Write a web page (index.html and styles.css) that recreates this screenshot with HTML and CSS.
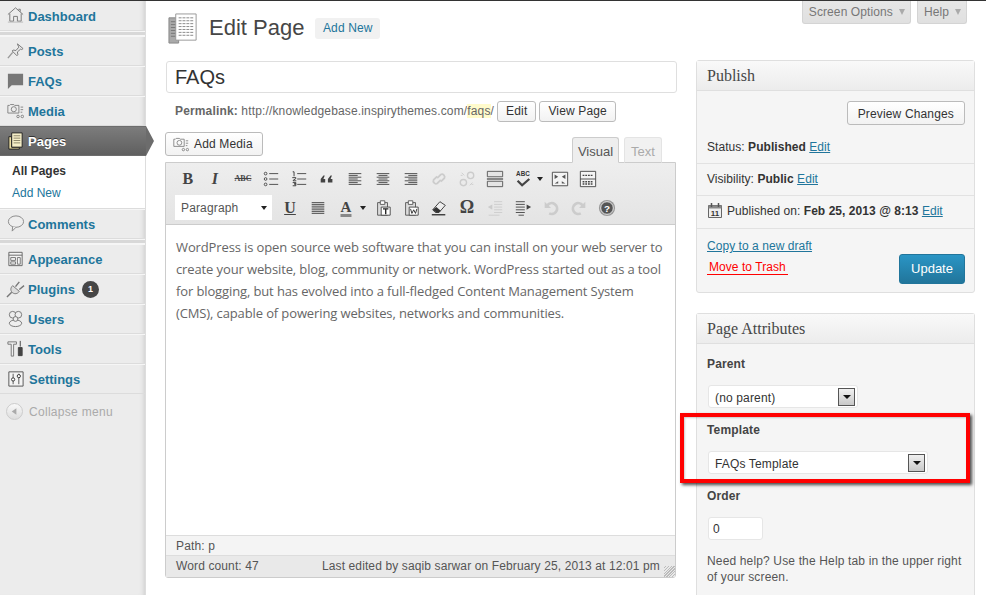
FILE: index.html
```html
<!DOCTYPE html>
<html>
<head>
    <meta charset="utf-8">
    <title>Edit Page</title>
    <link rel="stylesheet" href="styles.css">
</head>
<body>
    <nav class="sidebar">
        <a class="menu-item first"><svg class="menu-icon" viewBox="0 0 20 20"><path d="M2 10 10 3l8 7M4 9v8h4v-5h4v5h4V9M13 4.500h2v2.500" fill="none" stroke="#777"/><path d="M2 18h16" stroke="#bbb"/></svg>Dashboard</a>
        <div class="menu-sep"></div>
        <a class="menu-item"><svg class="menu-icon" viewBox="0 0 20 20"><path d="M12 3l6 5-1.500 1-1-.500-3.500 3 .5 3-1 1-5-5 1-1 3 .5 3-3.500-.5-1z" fill="#e8e8e8" stroke="#777"/><path d="M7 12 2 18" stroke="#999" stroke-width="1.500"/></svg>Posts</a>
        <a class="menu-item"><svg class="menu-icon" viewBox="0 0 20 20"><path d="M2 3h16v12H6l-4 4z" fill="#777"/></svg>FAQs</a>
        <a class="menu-item"><svg class="menu-icon menu-icon-small" viewBox="0 0 20 20"><path d="M1 4h2l1-1h4l1 1h5v9H1z" fill="none" stroke="#777"/><circle cx="8" cy="8.500" r="3" fill="none" stroke="#777"/><path d="M16 6h3M16 9h3M16 12h2" stroke="#777"/><circle cx="13" cy="17" r="1.500" fill="none" stroke="#777"/><circle cx="18" cy="17" r="1.500" fill="none" stroke="#777"/></svg>Media</a>
        <a class="menu-item current"><svg class="menu-icon" viewBox="0 0 20 20"><path d="M3 6h3v11h8v2H3z" fill="#e9dca0" stroke="#222"/><path d="M6 2h11v15H6z" fill="#f6efc8" stroke="#222"/><path d="M8 5h7M8 7.500h7M8 10h7M8 12.500h7" stroke="#8a8468"/></svg>Pages</a>
        <ul class="submenu">
            <li class="submenu-current">All Pages</li>
            <li>Add New</li>
        </ul>
        <a class="menu-item"><svg class="menu-icon" viewBox="0 0 20 20"><ellipse cx="10.500" cy="8" rx="8" ry="6" fill="#eee" stroke="#888"/><path d="M7 13.500 6.500 18l4-4" fill="#eee" stroke="#888"/></svg>Comments</a>
        <div class="menu-sep"></div>
        <a class="menu-item"><svg class="menu-icon" viewBox="0 0 20 20"><path d="M3 3.500h14v14H3z" fill="#f4f4f4" stroke="#666"/><path d="M3 6.500h14" stroke="#666"/><path d="M5 9h5v3H5zM5 13.500h5v2.500H5zM12 9h3v7h-3z" fill="none" stroke="#777"/></svg>Appearance</a>
        <a class="menu-item plugins"><svg class="menu-icon" viewBox="0 0 20 20"><path d="M7 7l7 6c-2 3-5 3-7 1.500S4 10 7 7z" fill="#ddd" stroke="#777"/><path d="M10 8l4-5M14 11l5-4M6 14l-5 5" stroke="#777" stroke-width="1.500"/></svg>Plugins<span class="badge">1</span></a>
        <a class="menu-item"><svg class="menu-icon" viewBox="0 0 20 20"><circle cx="7" cy="6" r="3.500" fill="#eee" stroke="#777"/><circle cx="13" cy="6" r="3.500" fill="#eee" stroke="#777"/><ellipse cx="10" cy="15" rx="6.500" ry="3.500" fill="#eee" stroke="#777"/><circle cx="10" cy="10.500" r="2.500" fill="#eee" stroke="#777"/></svg>Users</a>
        <a class="menu-item"><svg class="menu-icon" viewBox="0 0 20 20"><path d="M2 3h9v2.500H8V18H5.500V5.500H2z" fill="#eee" stroke="#777"/><path d="M15 2v6M13 9h4v8.500h-4z" fill="#444" stroke="#444"/></svg>Tools</a>
        <a class="menu-item settings"><svg class="menu-icon" viewBox="0 0 20 20"><path d="M3 3h15v15H3z" fill="#f4f4f4" stroke="#555"/><path d="M7.500 5v11M13.500 5v11" stroke="#555"/><circle cx="7.500" cy="11" r="1.700" fill="#fff" stroke="#333"/><circle cx="13.500" cy="7.500" r="1.700" fill="#fff" stroke="#333"/></svg>Settings</a>
        <div class="collapse"><span class="collapse-btn"><svg viewBox="0 0 16 16"><path d="M10 4.500v7L5 8z" fill="#aaa"/></svg></span>Collapse menu</div>
    </nav>

    <main class="content">
        <header class="topbar">
            <div class="heading">
                <svg class="heading-icon" viewBox="0 0 34 34"><path d="M2 6h10v26H2z" fill="#aaa" stroke="#888"/><path d="M4 10h8M4 13h8M4 16h8M4 19h8M4 22h8M4 25h8" stroke="#777"/><path d="M9 2h21v27H9z" fill="#fff" stroke="#999"/><path d="M12 6h15M12 9h15M12 12h15M12 15h15M12 18h15M12 21h15M12 24h15" stroke="#888" stroke-dasharray="3 1"/></svg>
                <h1>Edit Page</h1>
                <a class="add-new">Add New</a>
            </div>
            <div class="meta-tabs">
                <span class="meta-tab">Screen Options<i class="meta-arrow"></i></span>
                <span class="meta-tab">Help<i class="meta-arrow"></i></span>
            </div>
        </header>

        <div class="columns">
            <section class="editor-col">
                <input class="title-input" type="text" value="FAQs">
                <div class="permalink">
                    <strong>Permalink:</strong>&nbsp;http://knowledgebase.inspirythemes.com/<span class="slug">faqs</span>/
                    <a class="btn">Edit</a>
                    <a class="btn">View Page</a>
                </div>
                <div class="editor-tools">
                    <a class="btn add-media"><svg viewBox="0 0 20 20"><path d="M1 4h2l1-1h4l1 1h5v9H1z" fill="none" stroke="#777"/><circle cx="8" cy="8.500" r="3" fill="none" stroke="#777"/><path d="M16 6h3M16 9h3M16 12h2" stroke="#777"/><circle cx="13" cy="17" r="1.500" fill="none" stroke="#777"/><circle cx="18" cy="17" r="1.500" fill="none" stroke="#777"/></svg>Add Media</a>
                    <div class="tabs">
                        <span class="tab active">Visual</span>
                        <span class="tab tab-text">Text</span>
                    </div>
                </div>
                <div class="editor">
                    <div class="toolbar">
                        <div class="tool-row">
                            <span class="tool tool-b">B</span>
                            <span class="tool tool-i">I</span>
                            <span class="tool tool-abc">ABC</span>
                            <span class="tool"><svg viewBox="0 0 20 20"><path d="M8 4h10M8 10h10M8 16h10" stroke="#444"/><circle cx="4" cy="4" r="1.500" fill="none" stroke="#444"/><circle cx="4" cy="10" r="1.500" fill="none" stroke="#444"/><circle cx="4" cy="16" r="1.500" fill="none" stroke="#444"/></svg></span>
                            <span class="tool"><svg viewBox="0 0 20 20"><path d="M8 4h10M8 10h10M8 16h10" stroke="#444"/><path d="M3 2h1.500v5M2.500 8.500h4v1l-3 2v.5h3.500M3 14h3.500v1.500H4.500h2v2H3" fill="none" stroke="#333"/></svg></span>
                            <span class="tool"><svg viewBox="0 0 20 20"><path d="M3 14v-4l3-4h1.500L6 10h2v4zM11 14v-4l3-4h1.500L14 10h2v4z" fill="#444"/></svg></span>
                            <span class="tool"><svg viewBox="0 0 20 20"><path d="M3 4h14M3 6h10M3 8h14M3 10h10M3 12h14M3 14h10M3 16h14" stroke="#444"/></svg></span>
                            <span class="tool"><svg viewBox="0 0 20 20"><path d="M3 4h14M5 6h10M3 8h14M5 10h10M3 12h14M5 14h10M3 16h14" stroke="#444"/></svg></span>
                            <span class="tool"><svg viewBox="0 0 20 20"><path d="M3 4h14M7 6h10M3 8h14M7 10h10M3 12h14M7 14h10M3 16h14" stroke="#444"/></svg></span>
                            <span class="tool"><svg viewBox="0 0 20 20"><path d="M8 9l4-4a3 3 0 0 1 4 4l-4 4M12 11l-4 4a3 3 0 0 1-4-4l4-4" fill="none" stroke="#ccc" stroke-width="2"/></svg></span>
                            <span class="tool"><svg viewBox="0 0 20 20"><circle cx="14" cy="6" r="3.500" fill="none" stroke="#ccc" stroke-width="1.500"/><circle cx="6" cy="14" r="3.500" fill="none" stroke="#ccc" stroke-width="1.500"/><path d="M4 3l3 3M3 6h2M13 17l3-3M15 16h2" stroke="#ccc"/></svg></span>
                            <span class="tool"><svg viewBox="0 0 20 20"><path d="M1.500 1.500h17v6h-17zM1.500 12.500h17v6h-17z" fill="#e4e4e4" stroke="#555"/><path d="M1 10h18" stroke="#555" stroke-width="1.500"/></svg></span>
                            <span class="tool tool-spell"><svg viewBox="0 0 20 20"><text x="10" y="7" class="spell-text">ABC</text><path d="M4 12l5 5 8-7" fill="none" stroke="#444" stroke-width="2.500"/></svg></span><i class="tool-arrow"></i>
                            <span class="tool tool-full"><svg viewBox="0 0 20 20"><path d="M1.500 2.500h17v15h-17z" fill="#f4f4f4" stroke="#444"/><path d="M4 5l4 2.500-4 2.500zM16 5l-4 2.500 4 2.500zM4 15l4-2.500V15zM16 15l-4-2.500V15z" fill="#555"/></svg></span>
                            <span class="tool"><svg viewBox="0 0 20 20"><path d="M1.500 1.500h17v17h-17z" fill="#f4f4f4" stroke="#444"/><path d="M1.500 10h17" stroke="#444"/><path d="M4 6h12M4 13h12M4 15.500h12" stroke="#444" stroke-width="1.500" stroke-dasharray="2 1"/></svg></span>
                        </div>
                        <div class="tool-row">
                            <div class="format-select">Paragraph<i class="tool-arrow"></i></div>
                            <span class="tool tool-u">U</span>
                            <span class="tool"><svg viewBox="0 0 20 20"><path d="M3 4h14M3 6h14M3 8h14M3 10h14M3 12h14M3 14h14M3 16h14" stroke="#444"/></svg></span>
                            <span class="tool tool-color">A</span><i class="tool-arrow"></i>
                            <span class="tool tool-paste"><svg viewBox="0 0 20 20"><path d="M4 4h11v14H4z" fill="#ddd" stroke="#555"/><path d="M7 2h5v4H7z" fill="#fff" stroke="#555"/><path d="M8 9h10v9H8z" fill="#fff" stroke="#444"/><path d="M10 11h6M13 11v6" stroke="#222" stroke-width="1.500"/></svg></span>
                            <span class="tool"><svg viewBox="0 0 20 20"><path d="M4 4h11v14H4z" fill="#ddd" stroke="#555"/><path d="M7 2h5v4H7z" fill="#fff" stroke="#555"/><path d="M8 9h10v9H8z" fill="#fff" stroke="#444"/><path d="M9.500 11l1.500 5 2-4 2 4 1.500-5" fill="none" stroke="#222"/></svg></span>
                            <span class="tool"><svg viewBox="0 0 20 20"><path d="M3 12l8-9 6 4-7 8H6z" fill="#eee" stroke="#333"/><path d="M3 12l4 3h3l2-2-5-4z" fill="#333"/><path d="M2 17.500h15" stroke="#333" stroke-width="1.500"/></svg></span>
                            <span class="tool tool-omega">Ω</span>
                            <span class="tool"><svg viewBox="0 0 20 20"><path d="M9 3h9M9 6h9M9 9h9M9 12h9M9 15h9M3 18h12" stroke="#ccc"/><path d="M7 6v6L2 9z" fill="#ccc"/></svg></span>
                            <span class="tool"><svg viewBox="0 0 20 20"><path d="M2 3h10M2 6h10M2 9h10M2 12h10M2 15h10M5 18h6" stroke="#444"/><path d="M14 6v6l5-3z" fill="#444"/></svg></span>
                            <span class="tool"><svg viewBox="0 0 20 20"><path d="M6 7a6 6 0 1 1 2 9" fill="none" stroke="#ccc" stroke-width="3"/><path d="M3 3v7h7z" fill="#ccc"/></svg></span>
                            <span class="tool"><svg viewBox="0 0 20 20"><path d="M14 7a6 6 0 1 0-2 9" fill="none" stroke="#ccc" stroke-width="3"/><path d="M17 3v7h-7z" fill="#ccc"/></svg></span>
                            <span class="tool"><svg viewBox="0 0 20 20"><circle cx="10" cy="10" r="9" fill="#999"/><circle cx="10" cy="10" r="7" fill="#555" stroke="#eee"/><text x="10" y="14.500" class="help-text">?</text></svg></span>
                        </div>
                    </div>
                    <div class="editor-body">
                        <p>WordPress is open source web software that you can install on your web server to create your website, blog, community or network. WordPress started out as a tool for blogging, but has evolved into a full-fledged Content Management System (CMS), capable of powering websites, networks and communities.</p>
                    </div>
                    <div class="path-row">Path: p</div>
                    <div class="status-row">
                        <span>Word count: 47</span>
                        <span>Last edited by saqib sarwar on February 25, 2013 at 12:01 pm</span>
                    </div>
                </div>
            </section>

            <aside class="side-col">
                <section class="box">
                    <h3 class="box-title">Publish</h3>
                    <div class="preview-row"><a class="btn">Preview Changes</a></div>
                    <div class="misc misc-status">Status: <b>Published</b> <a class="link">Edit</a></div>
                    <div class="misc misc-visibility">Visibility: <b>Public</b> <a class="link">Edit</a></div>
                    <div class="misc misc-date"><svg viewBox="0 0 16 16"><path d="M1.500 3.500h13v12h-13z" fill="#eee" stroke="#666"/><path d="M1.500 3.500h13v3h-13z" fill="#888"/><path d="M4.500 1v4M11.500 1v4" stroke="#555" stroke-width="1.500"/><text x="8" y="14" class="date-text">11</text></svg>Published on: <b>Feb 25, 2013 @ 8:13</b> <a class="link">Edit</a></div>
                    <div class="publish-actions">
                        <div class="publish-links">
                            <a class="link">Copy to a new draft</a>
                            <a class="trash">Move to Trash</a>
                        </div>
                        <a class="update">Update</a>
                    </div>
                </section>

                <section class="box attributes">
                    <h3 class="box-title">Page Attributes</h3>
                    <div class="attr-body">
                        <p class="attr-label">Parent</p>
                        <div class="select select-parent">(no parent)<i class="select-arrow"></i></div>
                        <p class="attr-label">Template</p>
                        <div class="select select-template">FAQs Template<i class="select-arrow"></i></div>
                        <p class="attr-label">Order</p>
                        <input class="order-input" type="text" value="0">
                        <p class="attr-help">Need help? Use the Help tab in the upper right of your screen.</p>
                    </div>
                    <div class="highlight"></div>
                </section>
            </aside>
        </div>
    </main>
</body>
</html>
```

FILE: styles.css
```css
* {
    box-sizing: border-box;
}

body {
    margin: 0;
    height: 595px;
    overflow: hidden;
    display: flex;
    background: #fff;
    border-top: 1px solid #333;
    font-family: "Liberation Sans", Arial, sans-serif;
    font-size: 12px;
    color: #333;
}

/* sidebar */
.sidebar {
    width: 146px;
    flex: none;
    height: 594px;
    background: #ececec;
    border-right: 1px solid #ddd;
    box-shadow: inset -5px 0 5px -4px #ccc;
}

.menu-item {
    position: relative;
    display: flex;
    align-items: center;
    height: 30px;
    padding-left: 28px;
    border-top: 1px solid #f6f6f6;
    border-bottom: 1px solid #dcdcdc;
    color: #21759b;
    font-size: 13px;
    font-weight: bold;
}

.menu-item.first {
    border-top: 0;
    padding-top: 2px;
}

.menu-item.settings {
    padding-left: 29px;
}

.menu-icon {
    position: absolute;
    left: 6px;
    top: 4px;
    width: 19px;
    height: 19px;
}

.menu-icon-small {
    left: 7px;
    top: 5px;
    width: 17px;
    height: 17px;
}

.menu-sep {
    height: 5px;
    border-top: 1px solid #f6f6f6;
    border-bottom: 1px solid #f6f6f6;
    background: #d8d8d8;
}

.menu-item.current {
    margin-right: -1px;
    background: linear-gradient(#7c7c7c, #5f5f5f);
    border-color: #6d6d6d;
    color: #fff;
    text-shadow: 0 -1px 0 #333;
}

.menu-item.current::after {
    content: "";
    position: absolute;
    left: 146px;
    top: -1px;
    border-style: solid;
    border-width: 15px 0 15px 8px;
    border-color: transparent transparent transparent #6c6c6c;
}

.submenu {
    list-style: none;
    margin: 0;
    padding: 4px 0 0 12px;
    background: #fff;
    border-bottom: 1px solid #dcdcdc;
    height: 53px;
}

.submenu li {
    height: 22px;
    line-height: 22px;
    color: #21759b;
}

.submenu-current {
    font-weight: bold;
    color: #333 !important;
}

.badge {
    display: inline-block;
    width: 17px;
    height: 17px;
    margin-left: 7px;
    border-radius: 50%;
    background: #464646;
    color: #fff;
    font-size: 9px;
    line-height: 17px;
    text-align: center;
}

.collapse {
    display: flex;
    align-items: center;
    gap: 6px;
    height: 35px;
    padding-left: 6px;
    color: #aaa;
    letter-spacing: 0.3px;
}

.collapse-btn {
    width: 17px;
    height: 17px;
    border-radius: 50%;
    border: 1px solid #ccc;
    background: linear-gradient(#f9f9f9, #ddd);
}

.collapse-btn svg {
    display: block;
    width: 15px;
    height: 15px;
}

/* main area */
.content {
    flex: 1;
    padding-left: 20px;
    min-width: 0;
    letter-spacing: 0.15px;
}

.topbar {
    display: flex;
    justify-content: space-between;
    height: 59px;
}

.heading {
    display: flex;
    align-items: center;
    height: 54px;
}

.heading-icon {
    width: 33px;
    height: 33px;
    margin-left: 1px;
}

h1 {
    margin: 0 11px 0 9px;
    font-size: 22px;
    font-weight: normal;
    letter-spacing: 0;
    color: #464646;
}

.add-new {
    padding: 0 7.500px;
    height: 21px;
    line-height: 21px;
    background: #f1f1f1;
    border-radius: 3px;
    color: #21759b;
}

.meta-tabs {
    display: flex;
    gap: 6px;
    margin-right: 19px;
    letter-spacing: 0.1px;
}

.meta-tab {
    display: flex;
    align-items: center;
    height: 23px;
    padding: 0 5px 0 6px;
    background: linear-gradient(#e6e6e6, #e0e0e0);
    border: 1px solid #d4d4d4;
    border-top: 0;
    border-radius: 0 0 3px 3px;
    color: #777;
}

.meta-arrow {
    margin-left: 6px;
    border-style: solid;
    border-width: 6px 3.500px 0;
    border-color: #aaa transparent transparent;
}

.columns {
    display: grid;
    grid-template-columns: 511px 279px;
    column-gap: 19px;
    align-items: start;
}

.editor-col {
    min-width: 0;
}

.title-input {
    display: block;
    width: 511px;
    height: 32px;
    margin-top: 1px;
    padding: 0 8px;
    border: 1px solid #dfdfdf;
    border-radius: 3px;
    font-family: inherit;
    font-size: 20px;
    color: #333;
    outline: 0;
}

.permalink {
    display: flex;
    align-items: center;
    height: 22px;
    margin: 7px 0 10px;
    padding-left: 9px;
    color: #666;
}

.permalink strong {
    color: #666;
}

.slug {
    background: #fffbcc;
}

.btn {
    display: inline-block;
    height: 21px;
    line-height: 19px;
    padding: 0 8px;
    border: 1px solid #bbb;
    border-radius: 3px;
    background: linear-gradient(#fff, #f2f2f2);
    color: #333;
}

.permalink .btn {
    margin-left: 3px;
}

.editor-tools {
    display: flex;
    justify-content: space-between;
    align-items: flex-end;
    width: 511px;
    height: 30px;
    margin-left: -1px;
}

.add-media {
    display: flex;
    align-items: center;
    align-self: flex-start;
    height: 24px;
    padding: 0 9px 0 7px;
}

.add-media svg {
    width: 16px;
    height: 16px;
    margin-right: 5px;
}

.tabs {
    display: flex;
    gap: 5px;
    margin-right: 14px;
    margin-bottom: -1px;
    position: relative;
    letter-spacing: 0;
}

.tab {
    width: 47px;
    height: 26px;
    padding-top: 6px;
    text-align: center;
    border: 1px solid #e4e4e4;
    border-bottom: 1px solid #ccc;
    border-radius: 3px 3px 0 0;
    background: #f1f1f1;
    color: #aaa;
    font-size: 13px;
}

.tab-text {
    width: 38px;
}

.tab.active {
    background: #eee;
    border-color: #ccc #ccc #eee;
    color: #555;
}

.editor {
    display: flex;
    flex-direction: column;
    width: 511px;
    height: 416px;
    margin-left: -1px;
    border: 1px solid #ccc;
    border-radius: 0 0 3px 3px;
}

.toolbar {
    flex: none;
    height: 62px;
    padding-top: 1px;
    background: linear-gradient(#eeeeee, #e4e4e4);
    border-bottom: 1px solid #ccc;
}

.tool-row {
    display: flex;
    align-items: center;
    height: 29px;
    padding-left: 8px;
}

.tool {
    width: 28px;
    height: 20px;
    flex: none;
    display: flex;
    justify-content: center;
    align-items: center;
    color: #444;
}

.tool svg {
    width: 18px;
    height: 18px;
}

.tool-b, .tool-i, .tool-u {
    font-family: "Liberation Serif", serif;
    font-weight: bold;
    font-size: 16px;
}

.tool-i {
    font-style: italic;
    margin-left: -1px;
}

.tool-abc {
    font-family: "Liberation Serif", serif;
    font-weight: bold;
    font-size: 8px;
    letter-spacing: 0;
    text-decoration: line-through;
}

.tool-u {
    text-decoration: underline;
}

.tool-omega {
    font-family: "Liberation Serif", serif;
    font-weight: bold;
    font-size: 18px;
}

.tool-color {
    font-family: "Liberation Serif", serif;
    font-weight: bold;
    font-size: 15px;
    text-decoration: underline 3px #888;
    text-underline-offset: 2px;
}

.tool-arrow {
    flex: none;
    border-style: solid;
    border-width: 4px 3.500px 0;
    border-color: #222 transparent transparent;
}

.tool-full, .tool-paste {
    margin-left: 3px;
}

.spell-text {
    font-family: "Liberation Sans", sans-serif;
    font-size: 7px;
    font-weight: bold;
    text-anchor: middle;
    fill: #333;
}

.help-text {
    font-family: "Liberation Sans", sans-serif;
    font-size: 11px;
    font-weight: bold;
    text-anchor: middle;
    fill: #fff;
}

.date-text {
    font-family: "Liberation Sans", sans-serif;
    font-size: 8px;
    font-weight: bold;
    text-anchor: middle;
    fill: #333;
}

.format-select {
    display: flex;
    align-items: center;
    justify-content: space-between;
    width: 97px;
    height: 25px;
    flex: none;
    padding: 0 5px 0 6px;
    margin: 0 4px 0 1px;
    background: #fff;
    color: #555;
}

.editor-body {
    flex: 1;
    background: #fff;
    padding: 11px 10px;
    font-family: "Open Sans", sans-serif;
    font-size: 13px;
    letter-spacing: -0.12px;
    line-height: 22px;
    color: #666;
}

.editor-body p {
    margin: 0;
}

.path-row {
    height: 21px;
    line-height: 20px;
    padding-left: 10px;
    background: #f4f4f4;
    border-top: 1px solid #ddd;
    border-bottom: 1px solid #ddd;
    color: #555;
}

.status-row {
    display: flex;
    justify-content: space-between;
    height: 21px;
    line-height: 20px;
    padding: 0 15px 0 10px;
    letter-spacing: 0.12px;
    background: #e9e9e9 repeating-linear-gradient(135deg, #e9e9e9 0, #e9e9e9 1px, #bbb 1px, #bbb 2px) no-repeat right bottom / 11px 11px;
    color: #555;
}

/* side boxes */
.box {
    position: relative;
    background: #f5f5f5;
    border: 1px solid #dfdfdf;
    border-radius: 3px;
}

.box-title {
    height: 30px;
    margin: 0;
    padding-left: 10px;
    line-height: 29px;
    font-family: "Liberation Serif", serif;
    font-size: 16px;
    font-weight: normal;
    letter-spacing: 0;
    color: #464646;
    background: linear-gradient(#f9f9f9, #ececec);
    border-bottom: 1px solid #dfdfdf;
}

.preview-row {
    display: flex;
    justify-content: flex-end;
    padding: 10px 9px 0;
    height: 43px;
}

.preview-row .btn {
    height: 24px;
    line-height: 24px;
    padding: 0 10px;
}

.misc {
    padding-left: 10px;
    border-bottom: 1px solid #e2e2e2;
    letter-spacing: 0.05px;
}

.misc-status {
    height: 30px;
    line-height: 27px;
}

.misc-visibility {
    height: 32px;
    line-height: 30px;
}

.misc-date {
    height: 33px;
    line-height: 31px;
}

.misc-date svg {
    width: 16px;
    height: 16px;
    margin-right: 4px;
    vertical-align: -3px;
}

.link {
    color: #21759b;
    text-decoration: underline;
}

.publish-actions {
    display: flex;
    justify-content: space-between;
    height: 63px;
    padding: 10px 9px 0 10px;
}

.publish-links {
    display: flex;
    flex-direction: column;
    align-items: flex-start;
    gap: 7px;
    letter-spacing: 0.05px;
}

.trash {
    padding: 0 2px;
    color: #f00;
    border-bottom: 1px solid #f00;
    line-height: 14px;
}

.update {
    width: 66px;
    height: 30px;
    margin-top: 15px;
    border: 1px solid #21759b;
    border-radius: 3px;
    background: linear-gradient(#2a95c5, #21759b);
    color: #fff;
    line-height: 28px;
    text-align: center;
    font-size: 13px;
    letter-spacing: 0;
}

.attributes {
    margin-top: 20px;
    height: 300px;
    border-bottom: 0;
}

.attr-body {
    padding: 0 10px;
}

.attr-label {
    margin: 0;
    height: 41px;
    padding-top: 13px;
    font-weight: bold;
    color: #444;
}

.select {
    display: flex;
    align-items: center;
    justify-content: space-between;
    height: 23px;
    padding: 2px 2px 0 6px;
    margin: 0 0 2px 1px;
    background: #fff;
    border: 1px solid #e6e6e6;
    border-radius: 3px;
}

.select-parent {
    width: 150px;
}

.select-template {
    width: 220px;
}

.select-arrow {
    display: block;
    position: relative;
    width: 17px;
    height: 18px;
    margin-top: -1px;
    border: 1px solid #555;
    background: linear-gradient(#f0f0f0, #c8c8c8);
}

.select-arrow::after {
    content: "";
    position: absolute;
    left: 4px;
    top: 6px;
    border-style: solid;
    border-width: 4px 4px 0;
    border-color: #111 transparent transparent;
}

.order-input {
    display: block;
    width: 55px;
    height: 23px;
    padding: 0 4px;
    margin: 0 0 13px 1px;
    border: 1px solid #e6e6e6;
    border-radius: 3px;
    font-family: inherit;
    font-size: 12px;
    color: #333;
}

.attr-help {
    margin: 0;
    line-height: 16px;
    color: #555;
}

/* red annotation drawn over the template field */
.highlight {
    position: absolute;
    left: -17px;
    top: 99px;
    width: 290px;
    height: 70px;
    border: 4px solid #f00;
    box-shadow: 2px 2px 3px rgba(0, 0, 0, 0.7), inset 1px 1px 2px rgba(0, 0, 0, 0.2);
}
```
